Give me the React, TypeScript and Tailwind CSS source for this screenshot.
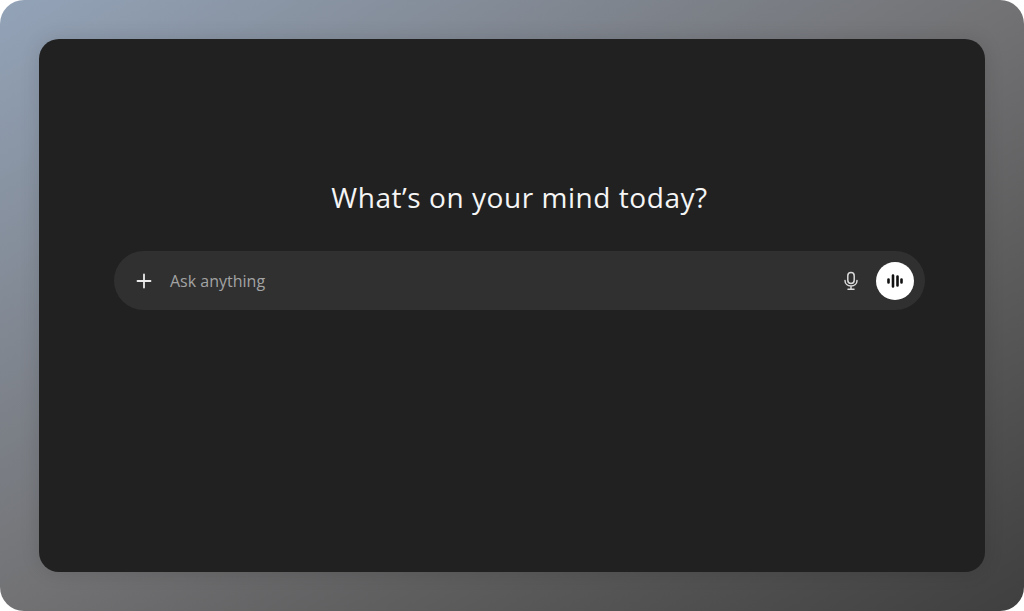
function PlusIcon() {
  return (
    <svg width="16" height="16" viewBox="0 0 16 16" fill="none" stroke="#ececec" strokeWidth="1.8" strokeLinecap="round">
      <path d="M8 1.5v13M1.5 8h13" />
    </svg>
  );
}

function MicIcon() {
  return (
    <svg width="16" height="20" viewBox="0 0 16 20" fill="none" stroke="#d9d9d9" strokeWidth="1.5" strokeLinecap="round">
      <rect x="4.8" y="1.5" width="6.4" height="11" rx="3.2" />
      <path d="M2 9.5c0 3.4 2.6 5.5 6 5.5s6-2.1 6-5.5M8 15v3M5 18.2h6" />
    </svg>
  );
}

function WaveIcon() {
  return (
    <svg width="18" height="16" viewBox="0 0 18 16" fill="none" stroke="#111111" strokeWidth="2.6" strokeLinecap="round">
      <path d="M2.5 6.5v3M7 2.5v11M11.5 3.5v9M15.5 6.5v3" />
    </svg>
  );
}

export default function App() {
  return (
    <div className="h-[611px] w-[1024px] overflow-hidden bg-white font-['Open_Sans','Noto_Sans',sans-serif]">
      <div className="h-full rounded-[24px] bg-gradient-to-br from-[#93a3b8] via-[#727274] to-[#3f3f3f] p-[39px]">
        <div className="flex h-[533px] flex-col items-center rounded-[20px] bg-[#212121] pt-[137px] pl-[15px] shadow-[0_0_20px_rgba(0,0,0,0.12)]">
          <h1 className="h-[75px] text-[28px] leading-[42px] font-normal tracking-[0.55px] text-[#f5f5f5]">What’s on your mind today?</h1>
          <div className="flex h-[59px] w-[811px] items-center rounded-full bg-[#303030] pr-[11px] pl-[22px]">
            <PlusIcon />
            <span className="ml-[18px] text-[16px] text-[#a3a3a3]">Ask anything</span>
            <div className="ml-auto flex items-center gap-[17px]">
              <MicIcon />
              <div className="flex h-[38px] w-[38px] items-center justify-center rounded-full bg-white">
                <WaveIcon />
              </div>
            </div>
          </div>
        </div>
      </div>
    </div>
  );
}
